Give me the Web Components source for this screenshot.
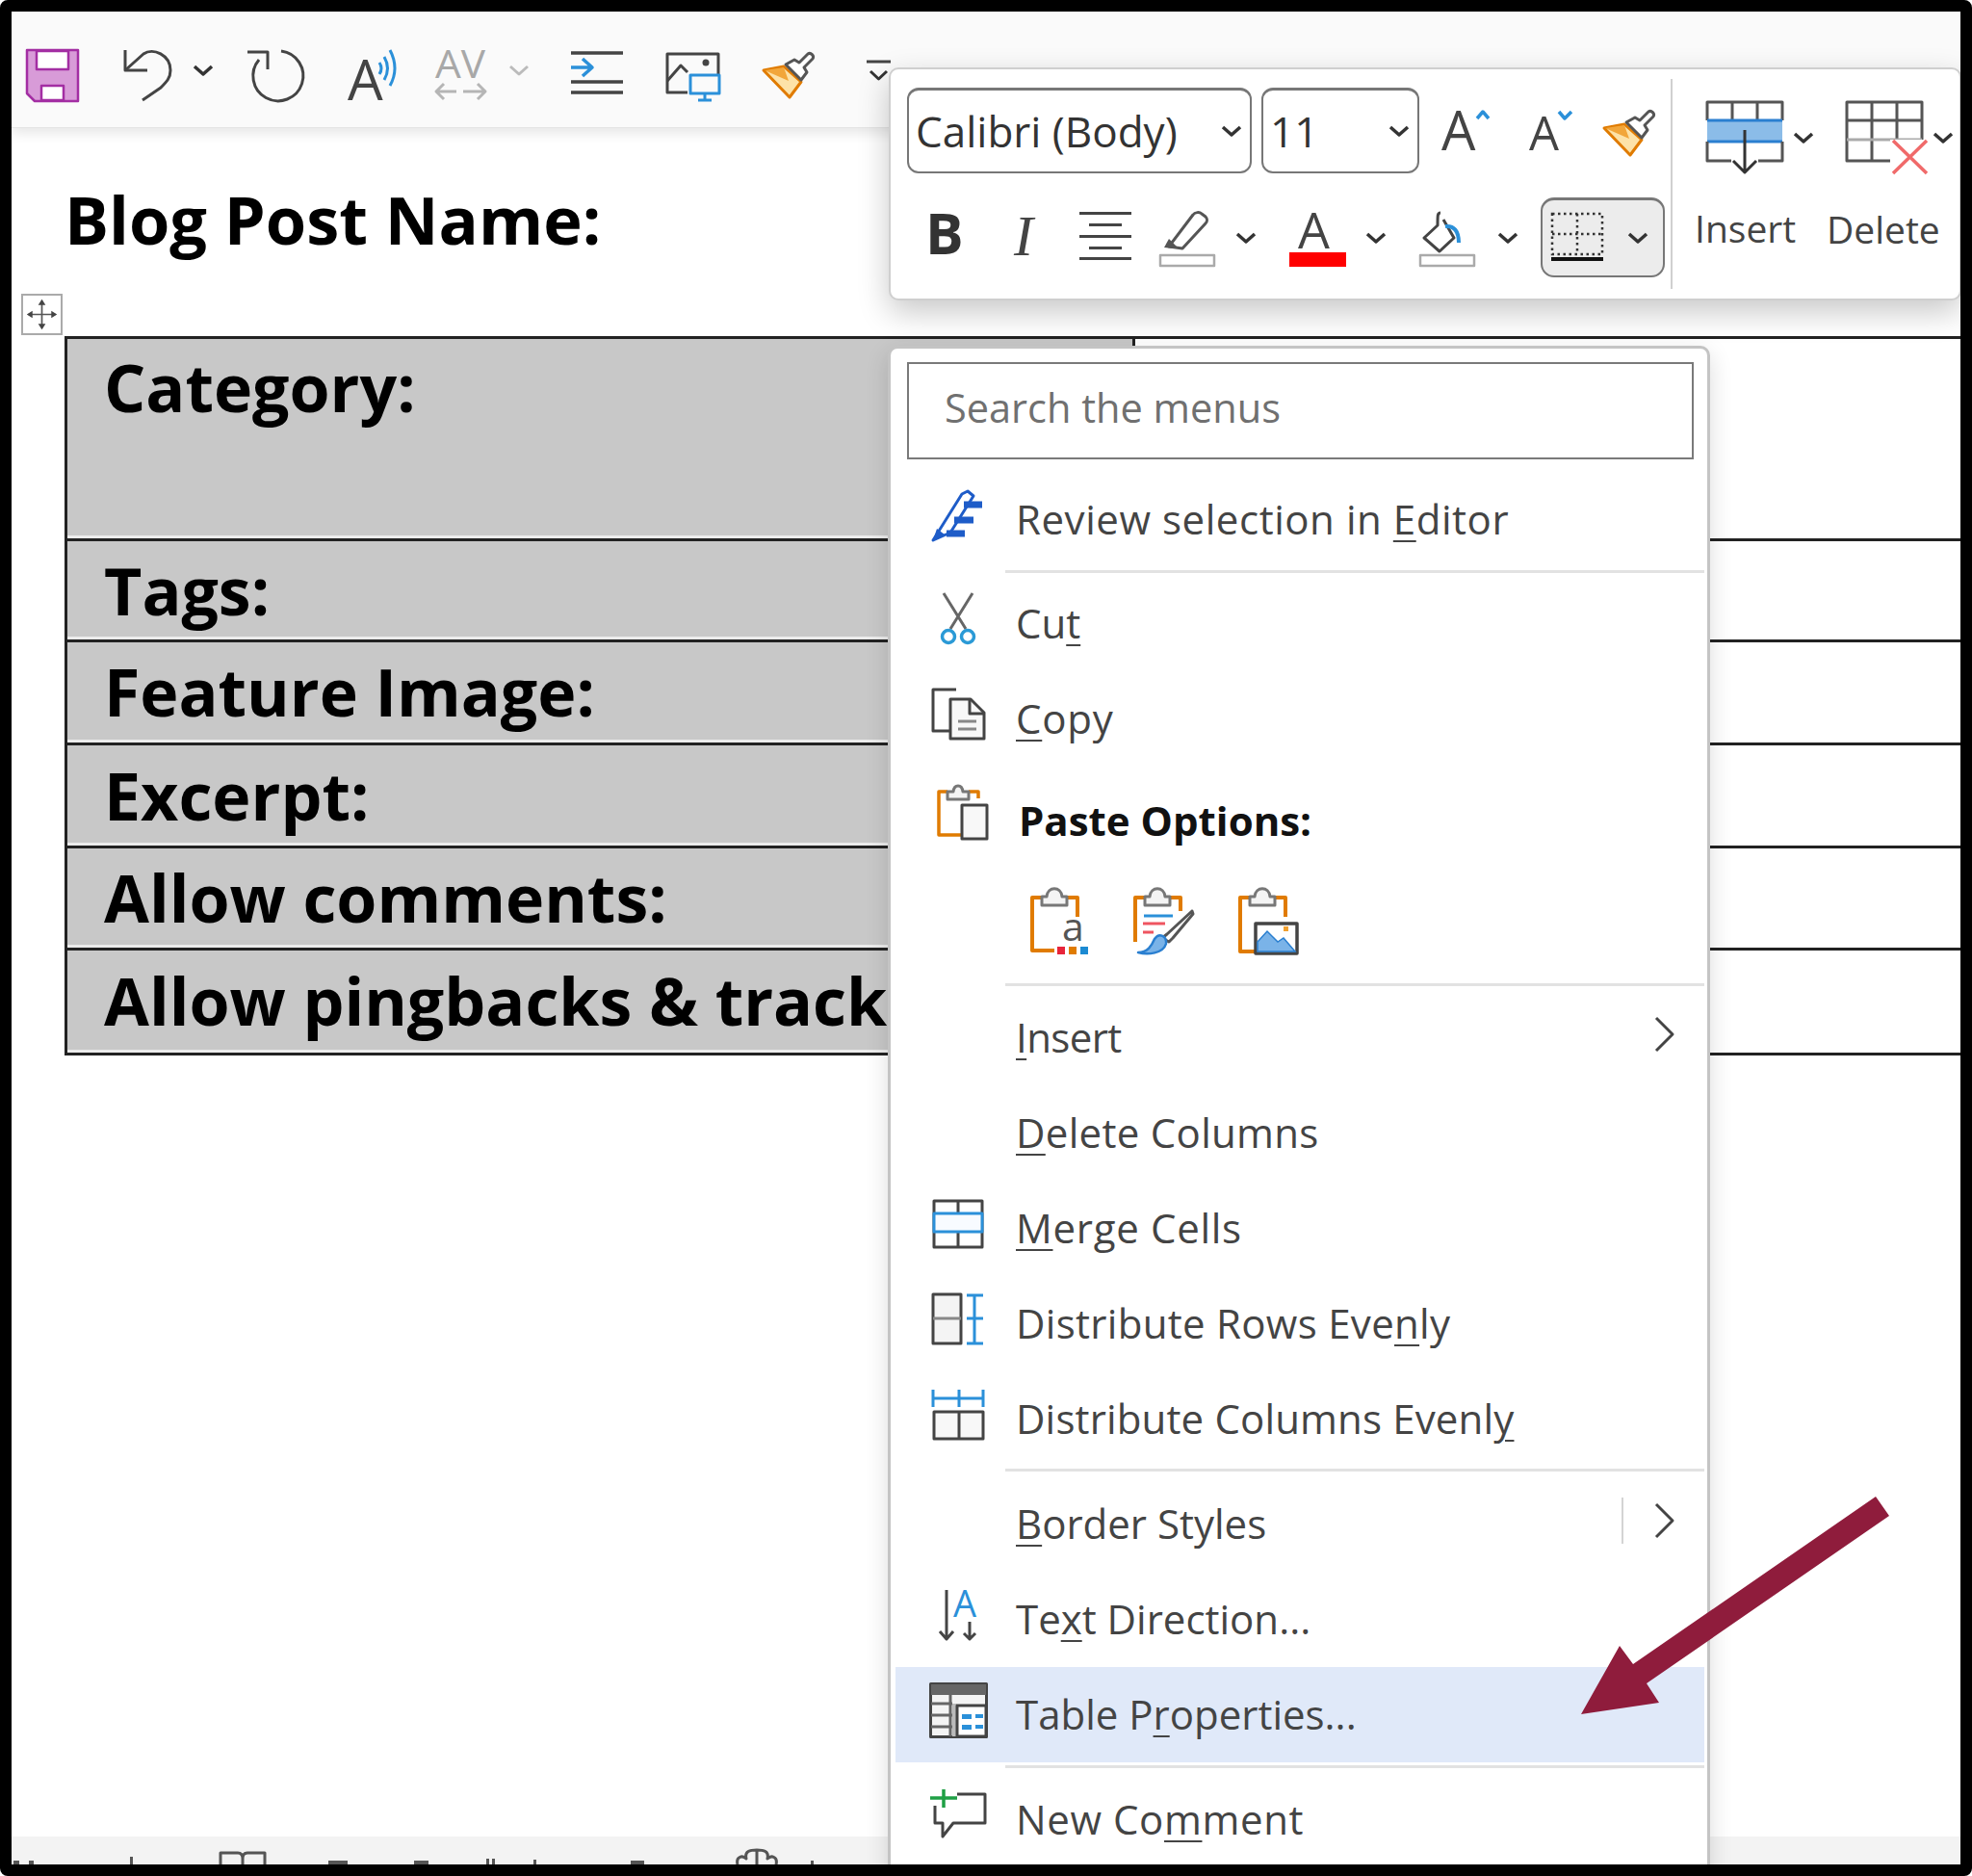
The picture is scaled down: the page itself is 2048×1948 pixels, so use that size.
<!DOCTYPE html>
<html lang="en"><head><meta charset="utf-8"><title>Table Properties</title>
<style>
html,body{margin:0;padding:0;background:#fff}
u{text-underline-offset:6px;text-decoration-thickness:2px}
</style></head><body>
<doc-frame>
  <quick-bar></quick-bar>
  <doc-title>Blog Post Name:</doc-title>
  <doc-table>
    <doc-row h="210" pt="8">Category:</doc-row>
    <doc-row h="105" pt="9">Tags:</doc-row>
    <doc-row h="107" pt="9">Feature Image:</doc-row>
    <doc-row h="107" pt="10">Excerpt:</doc-row>
    <doc-row h="106" pt="9">Allow comments:</doc-row>
    <doc-row h="109" pt="10">Allow pingbacks &amp; track</doc-row>
  </doc-table>
  <status-bar></status-bar>
  <move-handle slot="over"></move-handle>
  <mini-bar slot="over"></mini-bar>
  <context-menu slot="over">
    <search-box>Search the menus</search-box>
    <menu-item icon="review" style="letter-spacing:.55px">Review selection in <u>E</u>ditor</menu-item>
    <menu-sep h="9" at="3"></menu-sep>
    <menu-item icon="cut">Cu<u>t</u></menu-item>
    <menu-item icon="copy" style="letter-spacing:.8px"><u>C</u>opy</menu-item>
    <menu-item icon="paste" style="margin-top:7px" bold>Paste Options:</menu-item>
    <paste-row></paste-row>
    <menu-sep h="11" at="4"></menu-sep>
    <menu-item sub style="letter-spacing:-.6px"><u>I</u>nsert</menu-item>
    <menu-item style="letter-spacing:.3px"><u>D</u>elete Columns</menu-item>
    <menu-item icon="merge" style="letter-spacing:.7px"><u>M</u>erge Cells</menu-item>
    <menu-item icon="distrows"  style="letter-spacing:.3px">Distribute Rows Eve<u>n</u>ly</menu-item>
    <menu-item icon="distcols" style="letter-spacing:.15px">Distribute Columns Evenl<u>y</u></menu-item>
    <menu-sep h="10" at="2"></menu-sep>
    <menu-item sub split><u>B</u>order Styles</menu-item>
    <menu-item icon="textdir">Te<u>x</u>t Direction...</menu-item>
    <menu-item icon="tableprops" active>Table P<u>r</u>operties...</menu-item>
    <menu-sep h="10" at="3"></menu-sep>
    <menu-item icon="comment" style="letter-spacing:.6px">New Co<u>m</u>ment</menu-item>
  </context-menu>
  <arrow-mark slot="over"></arrow-mark>
</doc-frame>
<script>
const UI='"Open Sans","Noto Sans",sans-serif';
const DK='#444',BL='#2b90d9',OR='#e07b00',REDX='#f06a6a',LB='#7ab3e8';
const S=(d,c=DK,w=3,f='none')=>`<path d="${d}" stroke="${c}" stroke-width="${w}" fill="${f}" stroke-linejoin="round"/>`;
const T=(t,x,y,size,c=DK,extra='')=>`<text x="${x}" y="${y}" font-size="${size}" fill="${c}" font-family='"Open Sans",sans-serif' ${extra}>${t}</text>`;
const brush=S('M1 19 L22 15 L40 31 L28 47Z',OR,3,'#fde2a8')+'<path d="M2 19 L22 16 L27 30Z" fill="#f2a63a"/>'+S('M24 13 L33 8 L38 11 L47 2 C50 0 54 4 52 7 L43 16 L46 21 L40 29 Z','#555',3,'#fff');
const clip=S('M11 18 V9 H16 C17 -2 31 -2 32 9 H37 V18Z','#777',3,'#f4f4f4');
const ICONS={
save:[55,55,S('M1 1H54V54H9L1 46Z','#a32ea3',2.5,'#d89bd8')+S('M11 2H44V21H11Z','#a32ea3',2.5,'#fff')+S('M16 38H39V53H16Z','#a32ea3',2.5,'#fff')],
undo:[50,54,S('M1 1V22H24')+S('M1 22 L20 5 C30 -2 48 6 48 22 C48 30 44 34 38 40 L19 53')],
chev:[22,12,S('M2 2 L11 10 L20 2','#333',3.5)],
chevg:[22,12,S('M2 2 L11 10 L20 2','#bbb',3)],
redo:[56,54,S('M0 3H21V21')+S('M12 11 A26 26 0 1 0 35 2')],
read:[54,54,T('A',0,53,58,DK)+S('M33 14 Q37 20 33 26',BL)+S('M38 8 Q45 20 38 32',BL)+S('M44 1 Q54 20 44 38',BL)],
av:[53,53,T('AV',0,29,40,'#a8a8a8','textLength="52" lengthAdjust="spacingAndGlyphs"')+S('M22 43H1 M9 35L1 43L9 51 M29 43H52 M44 35L52 43L44 51','#b5b5b5')],
indent:[54,44,S('M0 2H54 M0 32H54 M0 43H54',DK,3.5)+S('M0 17H22 M12 8L22 17L12 26',BL,3.5)],
picture:[56,50,S('M22 41H1V1H54V22')+'<circle cx="41" cy="10" r="3.5" fill="#444"/>'+S('M1 29L15 13L22 20')+S('M25 23H55V42H25Z',BL)+S('M40 42V48M33 49H47',BL)],
brush:[55,48,brush],
customize:[27,22,S('M1 2H26',DK,3)+S('M5 12L13.5 20L22 12','#333',3)],
grow:[52,42,T('A',0,41,56,DK)+S('M37 8L43 1L49 8',BL,3.5)],
shrink:[46,42,T('A',0,41,49,DK)+S('M31 1L37 8L44 1',BL,3.5)],
bold:[35,42,T('B',0,42,59,'#333','font-weight="700"')],
italic:[26,44,`<text x="0" y="42" font-size="60" fill="#444" font-style="italic" font-family='"Liberation Serif",serif'>I</text>`],
align:[54,50,S('M0 1.5H54M10 13.5H44M0 25.5H54M10 37.5H44M0 48.5H54',DK,3)],
highlight:[58,57,S('M10 36 L35 3 C37 0 42 0 44 2 L48 5 C50 7 50 10 48 12 L24 38 Z','#555',3,'#fff')+'<path d="M5 37 L10 28 L18 36 L15 38Z" fill="#555"/>'+S('M1 45H57V56H1Z','#aaa',2.5,'#fff')],
fontcolor:[59,57,T('A',9,38,52,DK)+'<rect x="0" y="42" width="59" height="15" fill="#f00"/>'],
fill:[59,57,S('M22 1 C19 1 19 3 19 14 L5 27 L21 41 L36 27 L25 8')+S('M27 15 C36 14 41 20 41 32',BL,4)+S('M1 45H57V56H1Z','#aaa',2.5,'#fff')],
borders:[54,52,'<g stroke="#333" stroke-width="2.5" stroke-dasharray="2.5 3.5" fill="none"><rect x="1" y="1" width="52" height="42"/><path d="M27 1V43M1 22H53"/></g><rect x="0" y="46" width="54" height="4" fill="#111"/>'],
instable:[80,75,S('M1 20V1H79V20 M27 1V20 M53 1V20','#555')+'<rect x="1" y="20" width="78" height="22" fill="#8bbce8"/>'+S('M1 20H79M1 42H79','#2a7fd0',3)+S('M1 42V62H26 M54 62H79V42','#555')+S('M40 30V74 M28 62L40 74L52 62','#333')],
deltable:[80,76,S('M1 1H79V62H1Z M27 1V62 M53 1V62 M1 20H79','#555')+S('M1 40H79','#aaa',3)+'<path d="M46 40H86V76H46Z" fill="#fff"/>'+S('M49 41L84 75M84 41L49 75',REDX,3.5)],
review:[56,56,S('M2 54 L32 6 L38 3 L44 8 L20 46 Z','#1e5cc8',3,'#fff')+S('M34 17H53M24 33H44M16 47H35','#1e5cc8',7)+'<path d="M2 54 L6 42 L14 48Z" fill="#1e5cc8"/>'],
cut:[36,53,S('M3 0L26 37M33 0L10 37','#666')+`<circle cx="8" cy="45" r="6.5" fill="#fff" stroke="#2b9ad6" stroke-width="3.5"/><circle cx="28" cy="45" r="6.5" fill="#fff" stroke="#2b9ad6" stroke-width="3.5"/>`],
copy:[55,53,S('M25 1H1V44H18')+S('M19 11H40L54 25V52H19Z',DK,3,'#f8f8f8')+S('M39 11V26H54')+S('M27 34H46M27 42H46','#888')],
paste:[52,57,S('M10 7H1V52H24M32 7H42V14',OR,3.5)+S('M10 15V7H16C17 -1 25 -1 26 7H32V15Z','#777',3,'#f4f4f4')+S('M25 21H51V56H25Z',DK,3,'#f8f8f8')],
pastea:[61,70,S('M10 10H1V65H24M38 10H48V30',OR,4)+clip+T('a',32,55,41,'#555')+'<rect x="27" y="61" width="8" height="8" fill="#e8243a"/><rect x="39" y="61" width="8" height="8" fill="#e07b00"/><rect x="51" y="61" width="8" height="8" fill="#1c8ad2"/>'],
pasteb:[61,70,S('M10 10H1V56M38 10H48V24',OR,4)+clip+S('M10 29H40',BL,3)+S('M9 37H32M9 46H20','#ef5560',3)+S('M60 24 L34 48 L29 52 L36 56 L40 52 L61 27Z','#555',3,'#fff')+S('M4 67 C14 67 18 60 21 53 C26 46 34 50 33 58 C30 68 14 70 4 67Z','#2a7fd0',2.5,LB)],
pastep:[61,70,S('M10 10H1V66H16M38 10H48V30',OR,4)+clip+S('M17 37H60V68H17Z',DK,3.5,'#fff')+`<path d="M19 66V56L29 45L40 56L46 52L58 66Z" fill="${LB}" stroke="#2a7fd0" stroke-width="1.5"/><rect x="46" y="40" width="5" height="5" fill="#f0a030"/>`],
merge:[52,50,S('M1 1H51V49H1Z M26 1V14 M26 33V49')+S('M1 14H51V33H1Z',BL,3,'#f8fbff')],
distrows:[54,53,S('M1 1H30V52H1Z',DK,3,'#f4f4f4')+S('M1 26H30','#888')+S('M44 2V52 M36 2H53 M36 26H53 M36 52H53',BL)],
distcols:[56,53,S('M1 10H55 M2 1V19 M29 1V19 M54 1V19',BL)+S('M3 24H54V52H3Z',DK,3,'#f8f8f8')+S('M29 24V52')],
textdir:[38,52,S('M7 0V50M0 43L7 51L14 43')+T('A',14,28,38,BL)+S('M31 33V51M25 45L31 51L37 45')],
tableprops:[61,58,S('M1.5 1.5H59.5V56.5H1.5Z',DK,3,'#f4f4f4')+'<rect x="2" y="2" width="57" height="11" fill="#666"/>'+S('M2 22H24M2 34H24M2 46H24M22 13V56','#666')+'<rect x="24" y="22" width="5" height="34" fill="#bbb"/>'+S('M29 24H59V56H29Z',DK,3,'#fff')+`<path d="M34 33h10v5h-10zM48 33h8v4h-8zM34 44h10v5h-10zM48 44h8v4h-8z" fill="#2b90d9"/>`],
comment:[58,55,S('M28 6H57V36H24L13 50V36H5V18')+S('M14 1V20M0 10H28','#1fa045',3.5)],
right:[21,36,S('M2 1L19 18L2 35','#444',3)],
move:[43,43,S('M21.5 5V38M5 21.5H38','#555',2)+'<path d="M21.5 3L26 10H17ZM21.5 40L26 33H17ZM3 21.5L10 17V26ZM40 21.5L33 17V26Z" fill="#444"/>'],
book:[50,14,S('M2 14V2H20C23 2 25 4 25 8C25 4 27 2 30 2H48V14M25 8V14','#555',3)],
flower:[46,16,S('M3 16C1 8 8 6 12 10C10 2 16 1 23 1C30 1 36 2 34 10C38 6 45 8 43 16M23 1V16','#555',3)]
};
function def(name,css,html,init){
  customElements.define(name,class extends HTMLElement{
    constructor(){super();this.attachShadow({mode:'open'}).innerHTML=`<style>${css}</style>${html}`;}
    connectedCallback(){if(init)init(this,this.shadowRoot);}
  });
}
def('ms-icon',':host{display:inline-flex;flex:none}svg{display:block;overflow:visible}','<div></div>',(h,r)=>{
  const i=ICONS[h.getAttribute('name')];if(!i)return;
  r.querySelector('div').innerHTML=`<svg xmlns="http://www.w3.org/2000/svg" width="${i[0]}" height="${i[1]}" viewBox="0 0 ${i[0]} ${i[1]}">${i[2]}</svg>`;
});
const ic=(n,st='')=>`<ms-icon name="${n}" style="${st}"></ms-icon>`;
def('doc-frame',`:host{display:flex;flex-direction:column;position:relative;box-sizing:border-box;width:2048px;height:1948px;border:12px solid #000;border-radius:8px;background:#fff;overflow:hidden}`,`<slot></slot><slot name="over"></slot>`);
def('quick-bar',`:host{display:flex;flex:none;align-items:center;box-sizing:border-box;height:121px;padding:12px 0 0 15px;background:#fafafa;border-bottom:1px solid #e4e4e4;box-shadow:0 5px 12px rgba(0,0,0,.10);position:relative}`,
 ic('save')+ic('undo','margin-left:47px')+ic('chev','margin-left:21px;margin-bottom:10px')+ic('redo','margin-left:35px')+ic('read','margin-left:48px')+ic('av','margin-left:37px')+ic('chevg','margin-left:23px;margin-bottom:10px')+ic('indent','margin-left:43px;margin-bottom:6px')+ic('picture','margin-left:45px;margin-top:4px')+ic('brush','margin-left:44px')+ic('customize','margin-left:52px;margin-bottom:10px'));
def('doc-title',`:host{display:block;flex:none;box-sizing:border-box;height:216px;padding:53px 0 0 55px;font:700 68.5px/84px "Open Sans",sans-serif;color:#000;white-space:nowrap}`,`<slot></slot>`);
def('doc-table',`:host{display:block;flex:none;margin-left:55px;border-top:3px solid #222;border-left:3px solid #222}`,`<slot></slot>`);
def('doc-row',`:host{display:grid;grid-template-columns:1106px 1fr;box-sizing:border-box;border-bottom:3px solid #222}
.c{background:#c8c8c8;border-bottom:3px solid #ececec;padding-left:38px;font:700 68px/84px "Open Sans",sans-serif;color:#000;white-space:nowrap;overflow:hidden}
.r{background:#fff;border-left:3px solid #222}`,`<div class="c"><slot></slot></div><div class="r"></div>`,(h,r)=>{
  h.style.height=h.getAttribute('h')+'px';
  r.querySelector('.c').style.paddingTop=(h.getAttribute('pt')||9)+'px';
});
def('status-bar',`:host{display:flex;flex:none;align-items:flex-end;box-sizing:border-box;height:29px;margin-top:auto;background:#f3f3f3}
i{display:block;background:#555;height:4px;flex:none}`,
 `<i style="width:6px;margin-left:2px"></i><i style="width:5px;margin-left:10px"></i><i style="width:3px;height:8px;margin-left:100px"></i>`+ic('book','margin-left:89px')+`<i style="width:20px;margin-left:64px"></i><i style="width:15px;margin-left:69px"></i><i style="width:3px;margin-left:60px;height:6px"></i><i style="width:3px;margin-left:3px;height:6px"></i><i style="width:3px;margin-left:40px;height:5px"></i><i style="width:14px;margin-left:98px"></i>`+ic('flower','margin-left:94px')+`<i style="width:3px;margin-left:33px"></i>`);
def('move-handle',`:host{position:absolute;left:10px;top:293px;box-sizing:border-box;width:43px;height:43px;border:2px solid #aaa;background:#fff;display:flex;align-items:center;justify-content:center}`,ic('move','transform:scale(.85);margin:-2px'));
def('arrow-mark',`:host{position:absolute;left:1630px;top:1542px;width:320px;height:226px;display:block}svg{display:block}`,
 `<svg xmlns="http://www.w3.org/2000/svg" width="320" height="226" viewBox="0 0 320 226"><path d="M306 0L320 20L68 194L81 214L0 226L40 155L54 174Z" fill="#8f1c3c"/></svg>`);
def('combo-box',`:host{display:flex;align-items:center;box-sizing:border-box;flex:none;height:89px;border:2px solid #777;border-top-width:3px;border-radius:12px;background:#fff;padding-left:7px;font:400 44px ${UI};color:#333}
span{flex:1;white-space:nowrap}ms-icon{margin-right:8px}`,`<span><slot></slot></span>`+ic('chev'));
def('mini-tool',`:host{display:flex;flex-direction:column;flex:none}.top{display:flex;align-items:center}
.l{font:400 39px/50px ${UI};color:#444;margin-top:32px;white-space:nowrap}`,
 `<div class="top"><slot name="i"></slot>${ic('chev','margin-left:10px')}</div><div class="l"><slot></slot></div>`);
def('mini-bar',`:host{position:absolute;left:911px;top:58px;box-sizing:border-box;width:1114px;height:242px;display:flex;background:#fff;border:2px solid #cfcfcf;border-radius:10px;box-shadow:0 12px 32px rgba(0,0,0,.22)}
.left{flex:none;width:810px;box-sizing:border-box;padding:19px 0 0 17px;display:flex;flex-direction:column}
.row{display:flex;align-items:center}
.r2{margin-top:25px;height:83px}
.sep{flex:none;width:2px;height:218px;margin-top:10px;background:#d0d0d0}
.right{display:flex;padding-top:33px}
.bc{display:flex;align-items:center;box-sizing:border-box;flex:none;width:129px;height:83px;margin-left:23px;border:2px solid #777;border-top-width:3px;border-radius:14px;background:#ececec;padding-left:9px}`,
 `<div class="left"><div class="row"><combo-box style="width:358px">Calibri (Body)</combo-box><combo-box style="width:164px;margin-left:10px">11</combo-box>${ic('grow','margin-left:23px')}${ic('shrink','margin-left:39px')}${ic('brush','margin-left:31px;margin-bottom:-5px')}</div>
 <div class="row r2">${ic('bold','margin-left:19px;margin-bottom:8px')}${ic('italic','margin-left:57px;margin-bottom:4px')}${ic('align','margin-left:42px;margin-bottom:4px')}${ic('highlight','margin-left:29px;margin-top:3px')}${ic('chev','margin-left:21px')}${ic('fontcolor','margin-left:34px;margin-top:3px')}${ic('chev','margin-left:20px')}${ic('fill','margin-left:34px;margin-top:3px')}${ic('chev','margin-left:22px')}<div class="bc">${ic('borders')}${ic('chev','margin-left:25px')}</div></div></div>
 <div class="sep"></div>
 <div class="right"><mini-tool style="margin-left:35px">${ic('instable').replace('<ms-icon','<ms-icon slot="i"')}<span style="margin-left:-12px">Insert</span></mini-tool><mini-tool style="margin-left:33px">${ic('deltable').replace('<ms-icon','<ms-icon slot="i"')}<span style="margin-left:-20px">Delete</span></mini-tool></div>`);
def('context-menu',`:host{position:absolute;left:910px;top:347px;box-sizing:border-box;width:854px;height:1601px;background:#fff;border:3px solid #c4c4c4;border-bottom:0;border-radius:10px 10px 0 0;box-shadow:0 8px 24px rgba(0,0,0,.14);display:flex;flex-direction:column;padding:14px 3px 0 5px}`,`<slot></slot>`);
def('search-box',`:host{display:flex;align-items:center;flex:none;box-sizing:border-box;height:101px;margin:0 11px 13px 12px;padding:0 0 8px 37px;border:2px solid #7a7a7a;font:400 41.5px ${UI};color:#707070}`,`<slot></slot>`);
def('menu-sep',`:host{display:block;flex:none;position:relative}div{position:absolute;left:114px;right:0;height:3px;background:#e2e2e2}`,`<div></div>`,(h,r)=>{
  h.style.height=h.getAttribute('h')+'px';r.querySelector('div').style.top=h.getAttribute('at')+'px';
});
def('menu-item',`:host{display:flex;align-items:center;flex:none;box-sizing:border-box;height:99px;padding-left:30px;font:400 42px ${UI};color:#444;white-space:nowrap}
:host([active]){background:#e0e9f9}
:host([bold]){font-weight:700;color:#111}
.b{flex:none;width:70px;height:70px;margin-bottom:10px;display:flex;align-items:center;justify-content:center}
.t{margin-left:25px;margin-bottom:2px}
:host([bold]) .t{margin-left:28px}
.ch{margin-left:auto;display:flex;align-items:center;margin-right:31px;margin-bottom:8px}
.v{width:2px;height:48px;background:#d4d4d4;margin-right:32px}`,`<div class="b"></div><div class="t"><slot></slot></div><div class="ch"></div>`,(h,r)=>{
  const n=h.getAttribute('icon');
  r.querySelector('.b').innerHTML=n?ic(n,n==='paste'?'margin:0 0 8px 10px':''):'';
  r.querySelector('.ch').innerHTML=h.hasAttribute('sub')?(h.hasAttribute('split')?'<div class="v"></div>':'')+ic('right'):'';
});
def('paste-row',`:host{display:flex;align-items:center;flex:none;box-sizing:border-box;height:115px;padding:0 0 5px 141px}`,ic('pastea')+ic('pasteb','margin-left:46px')+ic('pastep','margin-left:48px'));
</script>
</body></html>
